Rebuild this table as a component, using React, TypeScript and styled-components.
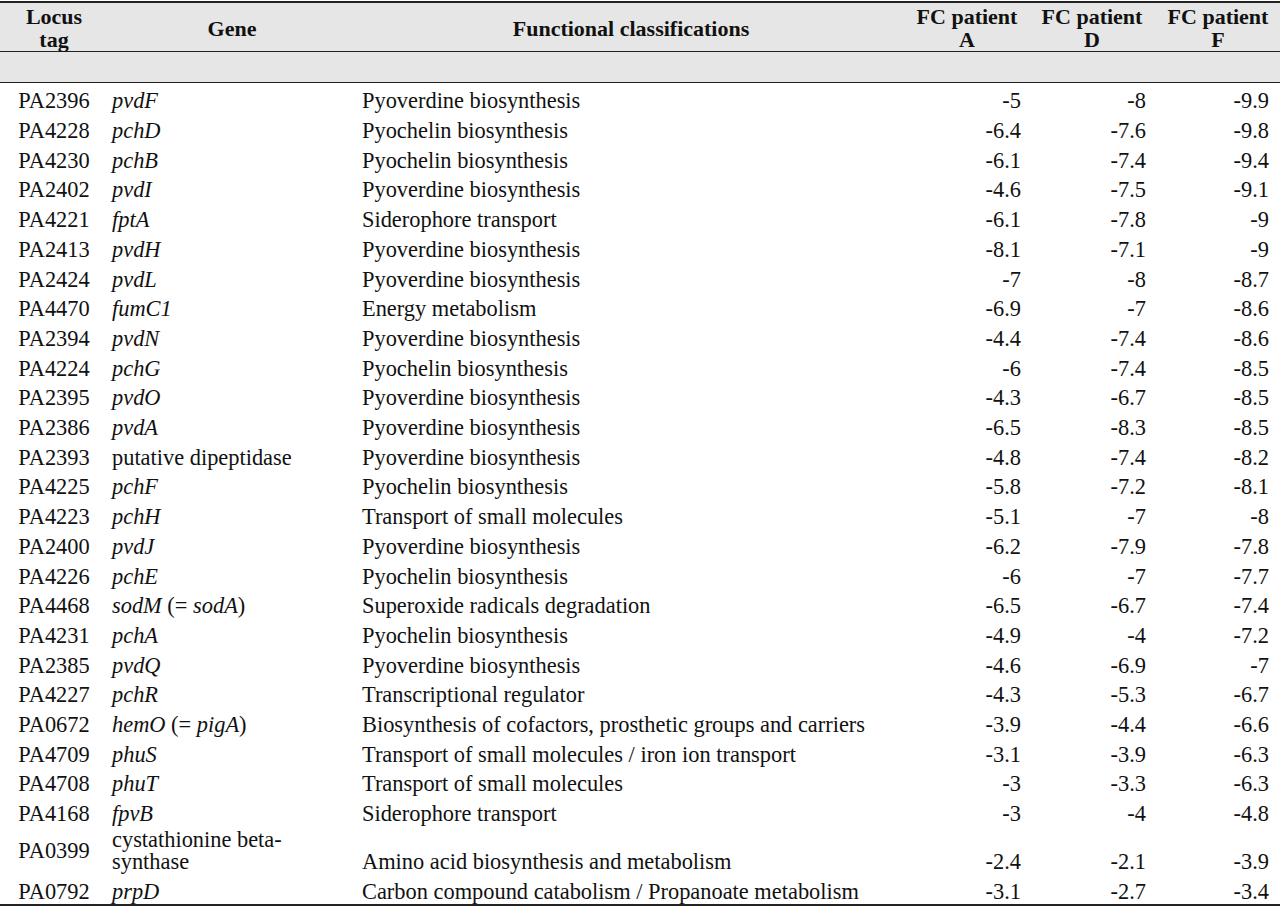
import React from 'react';
import styled, {createGlobalStyle} from "styled-components";

const GlobalStyle = createGlobalStyle`
  html, body {
    margin: 0;
    padding: 0;
    background: #fff;
  }
`

type RowType = {
    locus: string
    gene: React.ReactNode
    func: string
    a: string
    d: string
    f: string
    tall?: boolean
}

const rows: RowType[] = [
    {locus: 'PA2396', gene: <i>pvdF</i>, func: 'Pyoverdine biosynthesis', a: '-5', d: '-8', f: '-9.9'},
    {locus: 'PA4228', gene: <i>pchD</i>, func: 'Pyochelin biosynthesis', a: '-6.4', d: '-7.6', f: '-9.8'},
    {locus: 'PA4230', gene: <i>pchB</i>, func: 'Pyochelin biosynthesis', a: '-6.1', d: '-7.4', f: '-9.4'},
    {locus: 'PA2402', gene: <i>pvdI</i>, func: 'Pyoverdine biosynthesis', a: '-4.6', d: '-7.5', f: '-9.1'},
    {locus: 'PA4221', gene: <i>fptA</i>, func: 'Siderophore transport', a: '-6.1', d: '-7.8', f: '-9'},
    {locus: 'PA2413', gene: <i>pvdH</i>, func: 'Pyoverdine biosynthesis', a: '-8.1', d: '-7.1', f: '-9'},
    {locus: 'PA2424', gene: <i>pvdL</i>, func: 'Pyoverdine biosynthesis', a: '-7', d: '-8', f: '-8.7'},
    {locus: 'PA4470', gene: <i>fumC1</i>, func: 'Energy metabolism', a: '-6.9', d: '-7', f: '-8.6'},
    {locus: 'PA2394', gene: <i>pvdN</i>, func: 'Pyoverdine biosynthesis', a: '-4.4', d: '-7.4', f: '-8.6'},
    {locus: 'PA4224', gene: <i>pchG</i>, func: 'Pyochelin biosynthesis', a: '-6', d: '-7.4', f: '-8.5'},
    {locus: 'PA2395', gene: <i>pvdO</i>, func: 'Pyoverdine biosynthesis', a: '-4.3', d: '-6.7', f: '-8.5'},
    {locus: 'PA2386', gene: <i>pvdA</i>, func: 'Pyoverdine biosynthesis', a: '-6.5', d: '-8.3', f: '-8.5'},
    {locus: 'PA2393', gene: 'putative dipeptidase', func: 'Pyoverdine biosynthesis', a: '-4.8', d: '-7.4', f: '-8.2'},
    {locus: 'PA4225', gene: <i>pchF</i>, func: 'Pyochelin biosynthesis', a: '-5.8', d: '-7.2', f: '-8.1'},
    {locus: 'PA4223', gene: <i>pchH</i>, func: 'Transport of small molecules', a: '-5.1', d: '-7', f: '-8'},
    {locus: 'PA2400', gene: <i>pvdJ</i>, func: 'Pyoverdine biosynthesis', a: '-6.2', d: '-7.9', f: '-7.8'},
    {locus: 'PA4226', gene: <i>pchE</i>, func: 'Pyochelin biosynthesis', a: '-6', d: '-7', f: '-7.7'},
    {locus: 'PA4468', gene: <><i>sodM</i> (= <i>sodA</i>)</>, func: 'Superoxide radicals degradation', a: '-6.5', d: '-6.7', f: '-7.4'},
    {locus: 'PA4231', gene: <i>pchA</i>, func: 'Pyochelin biosynthesis', a: '-4.9', d: '-4', f: '-7.2'},
    {locus: 'PA2385', gene: <i>pvdQ</i>, func: 'Pyoverdine biosynthesis', a: '-4.6', d: '-6.9', f: '-7'},
    {locus: 'PA4227', gene: <i>pchR</i>, func: 'Transcriptional regulator', a: '-4.3', d: '-5.3', f: '-6.7'},
    {locus: 'PA0672', gene: <><i>hemO</i> (= <i>pigA</i>)</>, func: 'Biosynthesis of cofactors, prosthetic groups and carriers', a: '-3.9', d: '-4.4', f: '-6.6'},
    {locus: 'PA4709', gene: <i>phuS</i>, func: 'Transport of small molecules / iron ion transport', a: '-3.1', d: '-3.9', f: '-6.3'},
    {locus: 'PA4708', gene: <i>phuT</i>, func: 'Transport of small molecules', a: '-3', d: '-3.3', f: '-6.3'},
    {locus: 'PA4168', gene: <i>fpvB</i>, func: 'Siderophore transport', a: '-3', d: '-4', f: '-4.8'},
    {locus: 'PA0399', gene: <>cystathionine beta-<br/>synthase</>, func: 'Amino acid biosynthesis and metabolism', a: '-2.4', d: '-2.1', f: '-3.9', tall: true},
    {locus: 'PA0792', gene: <i>prpD</i>, func: 'Carbon compound catabolism / Propanoate metabolism', a: '-3.1', d: '-2.7', f: '-3.4'},
]

const App = () => {
    return (
        <>
            <GlobalStyle/>
            <Page>
                <Table>
                    <colgroup>
                        <col style={{width: 108}}/>
                        <col style={{width: 248}}/>
                        <col style={{width: 550}}/>
                        <col style={{width: 122}}/>
                        <col style={{width: 128}}/>
                        <col style={{width: 124}}/>
                    </colgroup>
                    <thead>
                    <HeadRow>
                        <HeadCell>Locus<br/>tag</HeadCell>
                        <HeadCell>Gene</HeadCell>
                        <HeadCell>Functional classifications</HeadCell>
                        <HeadCell>FC patient<br/>A</HeadCell>
                        <HeadCell>FC patient<br/>D</HeadCell>
                        <HeadCell>FC patient<br/>F</HeadCell>
                    </HeadRow>
                    <SpacerRow>
                        <td colSpan={6}/>
                    </SpacerRow>
                    </thead>
                    <tbody>
                    {rows.map(r => (
                        <BodyRow key={r.locus} $tall={r.tall}>
                            <Cell $align="center" $valign="middle">{r.locus}</Cell>
                            <Cell $pl={4} $valign="middle">{r.gene}</Cell>
                            <Cell $pl={6}>{r.func}</Cell>
                            <Cell $align="right" $pr={7}>{r.a}</Cell>
                            <Cell $align="right" $pr={10}>{r.d}</Cell>
                            <Cell $align="right" $pr={11}>{r.f}</Cell>
                        </BodyRow>
                    ))}
                    </tbody>
                </Table>
            </Page>
        </>
    );
};

export default App;


const Page = styled.div`
  width: 1280px;
  padding-top: 1px;
  font-family: "Liberation Serif", "Times New Roman", serif;
  color: #111;
`

const Table = styled.table`
  width: 1280px;
  table-layout: fixed;
  border-collapse: collapse;
  border-top: 2px solid #222;
  border-bottom: 2px solid #222;
  font-size: 22.4px;
`

const HeadRow = styled.tr`
  background: #e6e6e6;
  height: 49px;
  border-bottom: 1.5px solid #222;
`

const HeadCell = styled.th`
  font-size: 22px;
  font-weight: bold;
  text-align: center;
  vertical-align: middle;
  line-height: 23px;
  padding: 2px 0 0;
`

const SpacerRow = styled.tr`
  background: #e6e6e6;
  height: 31px;
  border-bottom: 1.5px solid #222;

  td {
    padding: 0;
  }
`

const BodyRow = styled.tr<{ $tall?: boolean }>`
  td {
    padding-top: ${p => p.$tall ? '3.2px' : '7.3px'};
    padding-bottom: ${p => p.$tall ? '0.4px' : '0'};
    line-height: 22.4px;
  }
`

const Cell = styled.td<{ $align?: 'left' | 'center' | 'right', $valign?: 'middle' | 'bottom', $pl?: number, $pr?: number }>`
  text-align: ${p => p.$align || 'left'};
  vertical-align: ${p => p.$valign || 'bottom'};
  padding-left: ${p => p.$pl || 0}px;
  padding-right: ${p => p.$pr || 0}px;
  white-space: nowrap;
`
